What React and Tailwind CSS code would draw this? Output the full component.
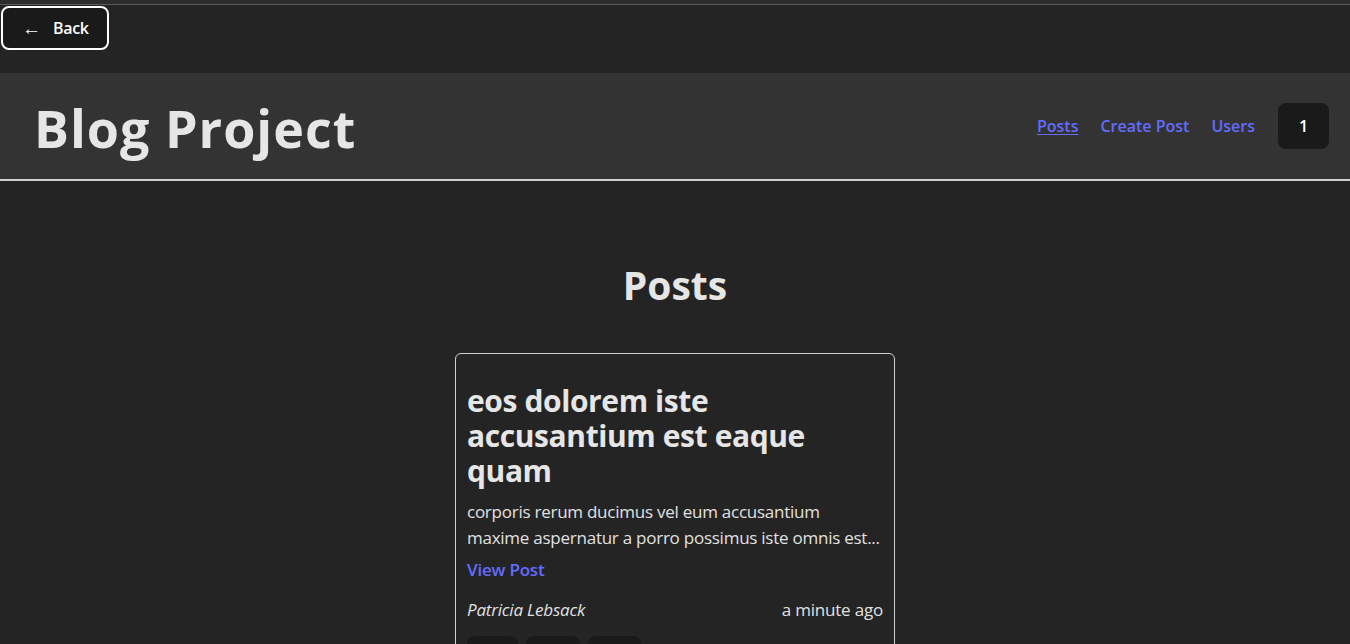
const font = "font-['Segoe_UI','Open_Sans',sans-serif]";

const navLinks = [
    { label: "Posts", active: true },
    { label: "Create Post" },
    { label: "Users" },
];

const reactions = [
    { name: "thumbsUp", width: "w-[51px]" },
    { name: "hooray", width: "w-[54px]" },
    { name: "heart", width: "w-[53px]" },
];

export default function App() {
    return (
        <div className={`min-h-[644px] overflow-hidden bg-[#242424] text-[#e1e1e1] ${font}`}>
            <div className="h-[5px] border-b border-[#5a5a5a] bg-[#2c2c2c]" />
            <div className="pl-[1px] pt-[1px]">
                <button
                    type="button"
                    className="flex h-[44px] w-[108px] items-center gap-[12px] rounded-lg border-2 border-white bg-[#1a1a1a] pl-[19px] text-[16px] font-semibold text-white"
                >
                    <span className="text-[19px] font-normal leading-none">←</span>
                    <span className="tracking-[-0.3px]">Back</span>
                </button>
            </div>

            <header className="mt-[23px] flex h-[108px] items-center justify-between border-b-2 border-[#d0d0d0] bg-[#333333] pl-[34px] pr-[21px]">
                <h1 className="pt-[4px] text-[52px] font-bold leading-none tracking-[1px] text-[#e6e6e6]">
                    Blog Project
                </h1>
                <nav className="flex items-center gap-[22px] text-[16px] font-semibold">
                    {navLinks.map((link) => (
                        <a
                            key={link.label}
                            href="#"
                            className={`text-[#646cff] ${link.active ? "underline underline-offset-2" : ""}`}
                        >
                            {link.label}
                        </a>
                    ))}
                    <button
                        type="button"
                        className="ml-px h-[46px] w-[51px] rounded-lg bg-[#1a1a1a] text-[16px] font-semibold text-white"
                    >
                        1
                    </button>
                </nav>
            </header>

            <main className="flex flex-col items-center">
                <h2 className="mt-[82px] text-[39px] font-bold leading-[44px] text-[#e6e6e6]">
                    Posts
                </h2>
                <article className="mt-[46px] w-[440px] rounded-md border border-[#cfcfcf] px-[11px] pt-[29px]">
                    <h3 className="text-[30px] font-bold leading-[35px] tracking-[-0.4px] text-[#e6e6e6]">
                        eos dolorem iste accusantium est eaque quam
                    </h3>
                    <p className="mt-[11px] text-[17px] leading-[26px] tracking-[-0.25px]">
                        corporis rerum ducimus vel eum accusantium maxime aspernatur a porro possimus iste omnis est...
                    </p>
                    <a href="#" className="mt-[6px] block text-[17px] font-semibold leading-[26px] tracking-[-0.2px] text-[#646cff]">
                        View Post
                    </a>
                    <div className="mt-[14px] flex items-center justify-between text-[17px] leading-[26px] tracking-[-0.2px]">
                        <span className="italic">Patricia Lebsack</span>
                        <span>a minute ago</span>
                    </div>
                    <div className="mt-[13px] flex gap-[8px] pb-[12px]">
                        {reactions.map((r) => (
                            <button
                                key={r.name}
                                type="button"
                                aria-label={r.name}
                                className={`h-[40px] ${r.width} rounded-lg bg-[#1a1a1a]`}
                            />
                        ))}
                    </div>
                </article>
            </main>
        </div>
    );
}
